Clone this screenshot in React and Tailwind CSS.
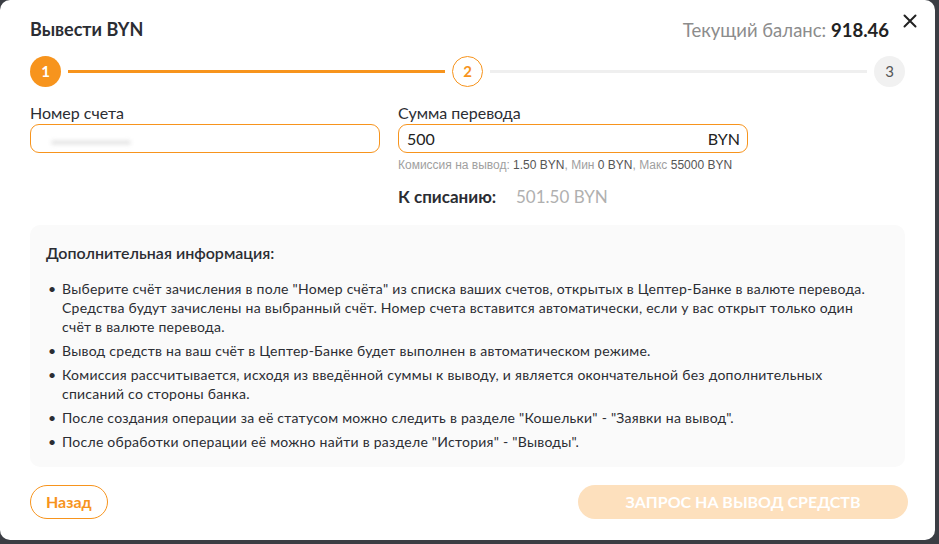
import React from "react";

const info = [
  'Выберите счёт зачисления в поле "Номер счёта" из списка ваших счетов, открытых в Цептер-Банке в валюте перевода. Средства будут зачислены на выбранный счёт. Номер счета вставится автоматически, если у вас открыт только один счёт в валюте перевода.',
  "Вывод средств на ваш счёт в Цептер-Банке будет выполнен в автоматическом режиме.",
  "Комиссия рассчитывается, исходя из введённой суммы к выводу, и является окончательной без дополнительных списаний со стороны банка.",
  'После создания операции за её статусом можно следить в разделе "Кошельки" - "Заявки на вывод".',
  'После обработки операции её можно найти в разделе "История" - "Выводы".',
];

const Stepper = () => (
  <div className="flex items-center px-[30px] mt-[12px]">
    <div className="w-[31px] h-[31px] rounded-full bg-[#f7941d] text-white flex items-center justify-center text-[15px] font-bold">
      1
    </div>
    <div className="flex-1 h-[3px] bg-[#f7941d] mx-[7px]" />
    <div className="w-[31px] h-[31px] rounded-full border border-[#f7941d] bg-white text-[#f7941d] flex items-center justify-center text-[15px] font-bold">
      2
    </div>
    <div className="flex-1 h-[3px] bg-[#efefef] mx-[7px]" />
    <div className="w-[31px] h-[31px] rounded-full bg-[#f1f1f1] text-[#555] flex items-center justify-center text-[15px]">
      3
    </div>
  </div>
);

export default function App() {
  return (
    <div
      className="w-[939px] h-[544px] bg-[#3b3e44] overflow-hidden"
      style={{ fontFamily: 'Lato, "Noto Sans", sans-serif' }}
    >
      <div className="w-[935px] h-[540px] bg-white rounded-[10px] flex flex-col">
        {/* header */}
        <div className="flex items-center justify-between pl-[30px] pr-[18px] pt-[14px] h-[44px]">
          <h1 className="text-[18px] font-bold text-[#2b2d33]">Вывести BYN</h1>
          <div className="flex items-start gap-[14px]">
            <div className="text-[18.5px] text-[#8c8c8c] mt-[4px]">
              Текущий баланс: <span className="font-bold text-[#222]">918.46</span>
            </div>
            <svg width="14" height="14" viewBox="0 0 14 14" className="mt-[1px]">
              <path d="M1.5 1.5 L12.5 12.5 M12.5 1.5 L1.5 12.5" stroke="#222" strokeWidth="2" strokeLinecap="round" />
            </svg>
          </div>
        </div>

        <Stepper />

        {/* form fields */}
        <div className="grid grid-cols-[350px_350px] gap-x-[18px] px-[30px] mt-[16px]">
          <div>
            <label className="block text-[16px] leading-[20px] text-[#2b2d33]">Номер счета</label>
            <div className="mt-[1px] h-[29px] rounded-[9px] border border-[#f7941d] flex items-center px-[12px] overflow-hidden">
              <div className="w-[80px] h-[3px] bg-[#c9c9c9] rounded-full blur-[2px] opacity-70 mt-[8px] ml-[8px]" />
            </div>
          </div>
          <div>
            <label className="block text-[16px] leading-[20px] text-[#2b2d33]">Сумма перевода</label>
            <div className="mt-[1px] h-[29px] rounded-[9px] border border-[#f7941d] flex items-center justify-between pl-[8px] pr-[7px] text-[16px] text-[#222]">
              <span>500</span>
              <span>BYN</span>
            </div>
            <div
              className="mt-[3px] text-[12px] text-[#a0a0a0]"
              style={{ fontFamily: '"Liberation Sans", Arial, sans-serif' }}
            >
              Комиссия на вывод: <span className="text-[#555]">1.50 BYN</span>, Мин{" "}
              <span className="text-[#555]">0 BYN</span>, Макс{" "}
              <span className="text-[#555]">55000 BYN</span>
            </div>
            <div className="mt-[10px] flex items-center text-[17px]">
              <span className="font-bold text-[#2b2d33] w-[118px]">К списанию:</span>
              <span className="text-[#b0b0b0]">501.50 BYN</span>
            </div>
          </div>
        </div>

        {/* additional info */}
        <div className="mx-[30px] mt-[15px] rounded-[10px] bg-[#fafafa] pl-[16px] pr-[12px] pt-[16px] pb-[16px]">
          <h2 className="text-[16px] font-semibold text-[#2b2d33]">Дополнительная информация:</h2>
          <ul className="mt-[14px] flex flex-col gap-[5px]">
            {info.map((t, i) => (
              <li key={i} className="flex text-[14px] leading-[19px] tracking-[0.25px] text-[#2b2d33]">
                <span className="w-[16px] shrink-0 pl-[2px]">•</span>
                <span className="w-[812px]">{t}</span>
              </li>
            ))}
          </ul>
        </div>

        {/* footer buttons */}
        <div className="flex items-center justify-between pl-[30px] pr-[27px] mt-[18px]">
          <button className="h-[34px] px-[15px] rounded-full border border-[#f7941d] text-[#f7941d] text-[16px] font-bold">
            Назад
          </button>
          <button className="h-[34px] w-[330px] rounded-full bg-[#fde0bd] text-white text-[16px] font-bold uppercase">
            Запрос на вывод средств
          </button>
        </div>
      </div>
    </div>
  );
}
